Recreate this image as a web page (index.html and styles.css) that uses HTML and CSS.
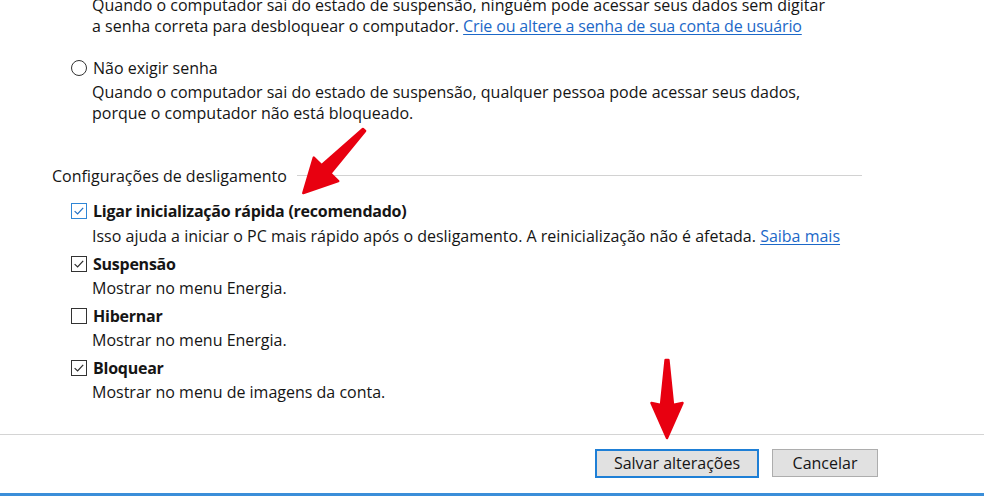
FILE: index.html
```html
<!DOCTYPE html>
<html lang="pt-BR">
<head>
<meta charset="utf-8">
<title>Configurações do sistema</title>
<link rel="stylesheet" href="styles.css">
</head>
<body>
<div class="page">
  <div class="content">
    <p class="desc desc-top">Quando o computador sai do estado de suspensão, ninguém pode acessar seus dados sem digitar<br>a senha correta para desbloquear o computador. <a href="#" class="link">Crie ou altere a senha de sua conta de usuário</a></p>

    <div class="option radio-option">
      <div class="row"><span class="radio"></span><span class="label">Não exigir senha</span></div>
      <p class="desc">Quando o computador sai do estado de suspensão, qualquer pessoa pode acessar seus dados,<br>porque o computador não está bloqueado.</p>
    </div>

    <div class="section-header"><span class="section-title">Configurações de desligamento</span><span class="rule"></span></div>

    <div class="checks">
      <div class="option">
        <div class="row"><span class="checkbox checked focused"><svg viewBox="0 0 16 16"><polyline points="3,8.2 6.4,11.4 12.8,4.4"/></svg></span><span class="label bold">Ligar inicialização rápida (recomendado)</span></div>
        <p class="desc first">Isso ajuda a iniciar o PC mais rápido após o desligamento. A reinicialização não é afetada. <a href="#" class="link link-short">Saiba mais</a></p>
      </div>
      <div class="option">
        <div class="row"><span class="checkbox checked"><svg viewBox="0 0 16 16"><polyline points="3,8.2 6.4,11.4 12.8,4.4"/></svg></span><span class="label bold">Suspensão</span></div>
        <p class="desc">Mostrar no menu Energia.</p>
      </div>
      <div class="option">
        <div class="row"><span class="checkbox"></span><span class="label bold">Hibernar</span></div>
        <p class="desc">Mostrar no menu Energia.</p>
      </div>
      <div class="option">
        <div class="row"><span class="checkbox checked"><svg viewBox="0 0 16 16"><polyline points="3,8.2 6.4,11.4 12.8,4.4"/></svg></span><span class="label bold">Bloquear</span></div>
        <p class="desc">Mostrar no menu de imagens da conta.</p>
      </div>
    </div>
  </div>

  <div class="footer">
    <button class="btn primary">Salvar alterações</button>
    <button class="btn">Cancelar</button>
  </div>

  <div class="bottom-bar"></div>

  <svg class="annotations" viewBox="0 0 984 496" width="984" height="496">
    <polygon class="arrow" points="362.9,129 321.7,165.3 313.8,157.7 303.3,193 338.2,181.1 330.3,173.5 365.1,131"/>
    <polygon class="arrow" points="665.6,360 661,405 651.5,403 667,438 682.5,403 673,405 668.4,360"/>
  </svg>
</div>
</body>
</html>
```

FILE: styles.css
```css
html, body {
  margin: 0;
  padding: 0;
  background: #ffffff;
}

body {
  font-family: "Open Sans", "Noto Sans", "DejaVu Sans", sans-serif;
  font-size: 16px;
  color: #151515;
}

.page {
  position: relative;
  width: 984px;
  height: 496px;
  overflow: hidden;
  display: flex;
  flex-direction: column;
}

.content {
  margin-top: -5.5px;
  padding-left: 52px;
}

p {
  margin: 0;
}

.desc {
  line-height: 21px;
  padding-left: 40px;
  white-space: nowrap;
}

.link {
  color: #1c68c8;
  text-decoration: underline;
  text-underline-offset: 2px;
  letter-spacing: -0.15px;
}

.link.link-short {
  letter-spacing: 0;
}

.option {
  display: flex;
  flex-direction: column;
  gap: 3px;
}

.radio-option {
  margin-top: 21px;
}

.row {
  display: flex;
  align-items: center;
  height: 21px;
  padding-left: 19px;
  gap: 6px;
}

.label {
  line-height: 21px;
  white-space: nowrap;
}

.bold {
  font-weight: 700;
  letter-spacing: -0.25px;
}

.radio {
  width: 16px;
  height: 16px;
  box-sizing: border-box;
  border: 1px solid #333333;
  border-radius: 50%;
  background: #ffffff;
}

.checkbox {
  width: 16px;
  height: 16px;
  box-sizing: border-box;
  border: 1px solid #333333;
  background: #ffffff;
  display: flex;
}

.checkbox.focused {
  border-color: #2f86d6;
}

.checkbox svg {
  width: 100%;
  height: 100%;
}

.checkbox polyline {
  fill: none;
  stroke: #2b2b2b;
  stroke-width: 1.4;
}

.checkbox.focused polyline {
  stroke: #1f6fc4;
}

.section-header {
  display: flex;
  align-items: center;
  margin-top: 42px;
  margin-right: 122px;
  height: 21px;
}

.section-title {
  white-space: nowrap;
  line-height: 21px;
}

.rule {
  flex: 1;
  height: 1px;
  margin-left: 10px;
  margin-top: -2px;
  background: #d2d2d2;
}

.checks {
  margin-top: 14px;
  display: flex;
  flex-direction: column;
  gap: 7px;
}

.checks .desc.first {
  margin-top: 1px;
}

.footer {
  margin-top: 31px;
  border-top: 1px solid #d4d4d4;
  padding-top: 14px;
  padding-right: 106px;
  display: flex;
  justify-content: flex-end;
  align-items: center;
  gap: 13px;
}

.btn {
  font-family: inherit;
  font-size: 16px;
  color: #151515;
  background: #e1e1e1;
  border: 1px solid #adadad;
  height: 28px;
  box-sizing: border-box;
  padding: 0;
  line-height: 24px;
  width: 106px;
}

.btn.primary {
  width: 164px;
  height: 29px;
  border: 2px solid #1e7fd6;
}

.bottom-bar {
  margin-top: auto;
  height: 3px;
  background: #3b8ed9;
}

.annotations {
  position: absolute;
  left: 0;
  top: 0;
  pointer-events: none;
}

.arrow {
  fill: #e80010;
  stroke: #e80010;
  stroke-width: 2.5;
  stroke-linejoin: round;
}
```
